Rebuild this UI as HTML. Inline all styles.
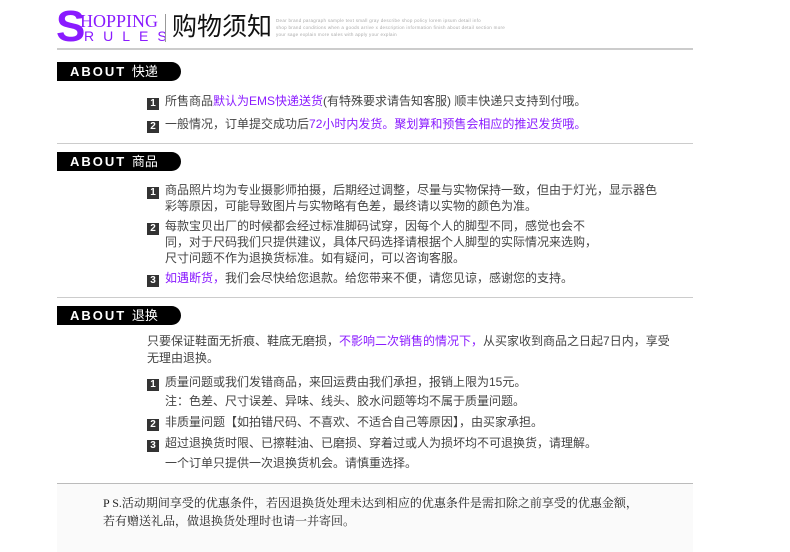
<!DOCTYPE html>
<html><head><meta charset="utf-8"><style>
*{margin:0;padding:0;box-sizing:border-box}
body{width:790px;height:552px;background:#fff;position:relative;overflow:hidden;font-family:"Liberation Sans","Noto Sans CJK SC",sans-serif;color:#444}
.a{position:absolute;white-space:nowrap}
.t{font-size:12px;line-height:16px;color:#444}
.p{color:#8a1bff}
.n{display:inline-block;width:12px;height:12px;background:#333;color:#fff;font-size:10px;line-height:12px;text-align:center;font-weight:bold;margin-right:6px;vertical-align:-1px;font-family:"Liberation Sans",sans-serif}
.badge{position:absolute;left:57px;width:124px;height:19px;background:#000;border-radius:0 10px 10px 0;color:#fff;font-size:13px;line-height:19px;padding-left:13px;font-weight:bold;letter-spacing:2px}
.badge span{font-weight:normal;letter-spacing:0}
.hr{position:absolute;left:57px;width:636px;height:2px;background:#ccc}
</style></head><body>
<div class="a" style="left:56px;top:5px;font-family:'Liberation Sans',sans-serif;font-size:44px;line-height:44px;color:#8a1bff;font-weight:bold">S</div>
<div class="a" style="left:80px;top:12px;font-family:'Liberation Serif',serif;font-size:18px;line-height:18px;color:#8a1bff">HOPPING</div>
<div class="a" style="left:84px;top:29px;font-family:'Liberation Sans',sans-serif;font-size:14px;line-height:14px;color:#8a1bff;letter-spacing:9px">RULES</div>
<div class="a" style="left:165px;top:14px;width:1px;height:28px;background:#999"></div>
<div class="a" style="left:172px;top:11px;font-size:25px;line-height:32px;color:#111">购物须知</div>
<div class="a" style="left:276px;top:17px;font-size:4.5px;line-height:7px;color:#aaa;letter-spacing:0.3px">Dear brand paragraph sample text small gray describe shop policy lorem ipsum detail info<br>shop brand conditions when a goods arrive x description information finish about detail section more<br>your sage explain more sales with apply your explain</div>
<div class="hr" style="top:48px"></div>

<div class="badge" style="top:62px">ABOUT <span>快递</span></div>
<div class="a t" style="left:147px;top:93px"><span class="n">1</span>所售商品<span class="p">默认为EMS快递送货</span>(有特殊要求请告知客服) 顺丰快递只支持到付哦。</div>
<div class="a t" style="left:147px;top:116px"><span class="n">2</span>一般情况，订单提交成功后<span class="p">72小时内发货。聚划算和预售会相应的推迟发货哦。</span></div>
<div class="hr" style="top:143px;height:1px"></div>

<div class="badge" style="top:152px">ABOUT <span>商品</span></div>
<div class="a t" style="left:147px;top:182px"><span class="n">1</span>商品照片均为专业摄影师拍摄，后期经过调整，尽量与实物保持一致，但由于灯光，显示器色</div>
<div class="a t" style="left:165px;top:198px">彩等原因，可能导致图片与实物略有色差，最终请以实物的颜色为准。</div>
<div class="a t" style="left:147px;top:218px"><span class="n">2</span>每款宝贝出厂的时候都会经过标准脚码试穿，因每个人的脚型不同，感觉也会不</div>
<div class="a t" style="left:165px;top:234px">同，对于尺码我们只提供建议，具体尺码选择请根据个人脚型的实际情况来选购，</div>
<div class="a t" style="left:165px;top:250px">尺寸问题不作为退换货标准。如有疑问，可以咨询客服。</div>
<div class="a t" style="left:147px;top:270px"><span class="n">3</span><span class="p">如遇断货，</span>我们会尽快给您退款。给您带来不便，请您见谅，感谢您的支持。</div>
<div class="hr" style="top:297px;height:1px"></div>

<div class="badge" style="top:306px">ABOUT <span>退换</span></div>
<div class="a t" style="left:147px;top:333px">只要保证鞋面无折痕、鞋底无磨损，<span class="p">不影响二次销售的情况下，</span>从买家收到商品之日起7日内，享受</div>
<div class="a t" style="left:147px;top:350px">无理由退换。</div>
<div class="a t" style="left:147px;top:374px"><span class="n">1</span>质量问题或我们发错商品，来回运费由我们承担，报销上限为15元。</div>
<div class="a t" style="left:165px;top:393px">注：色差、尺寸误差、异味、线头、胶水问题等均不属于质量问题。</div>
<div class="a t" style="left:147px;top:414px"><span class="n">2</span>非质量问题【如拍错尺码、不喜欢、不适合自己等原因】，由买家承担。</div>
<div class="a t" style="left:147px;top:435px"><span class="n">3</span>超过退换货时限、已擦鞋油、已磨损、穿着过或人为损坏均不可退换货，请理解。</div>
<div class="a t" style="left:165px;top:455px">一个订单只提供一次退换货机会。请慎重选择。</div>

<div class="a" style="left:57px;top:483px;width:636px;height:69px;background:#fafafa;border-top:1px solid #bbb"></div>
<div class="a" style="left:103px;top:494px;font-size:12px;line-height:18px;color:#222;font-family:'Liberation Serif','Noto Serif CJK SC',serif">P S.活动期间享受的优惠条件，若因退换货处理未达到相应的优惠条件是需扣除之前享受的优惠金额，<br>若有赠送礼品，做退换货处理时也请一并寄回。</div>
</body></html>
